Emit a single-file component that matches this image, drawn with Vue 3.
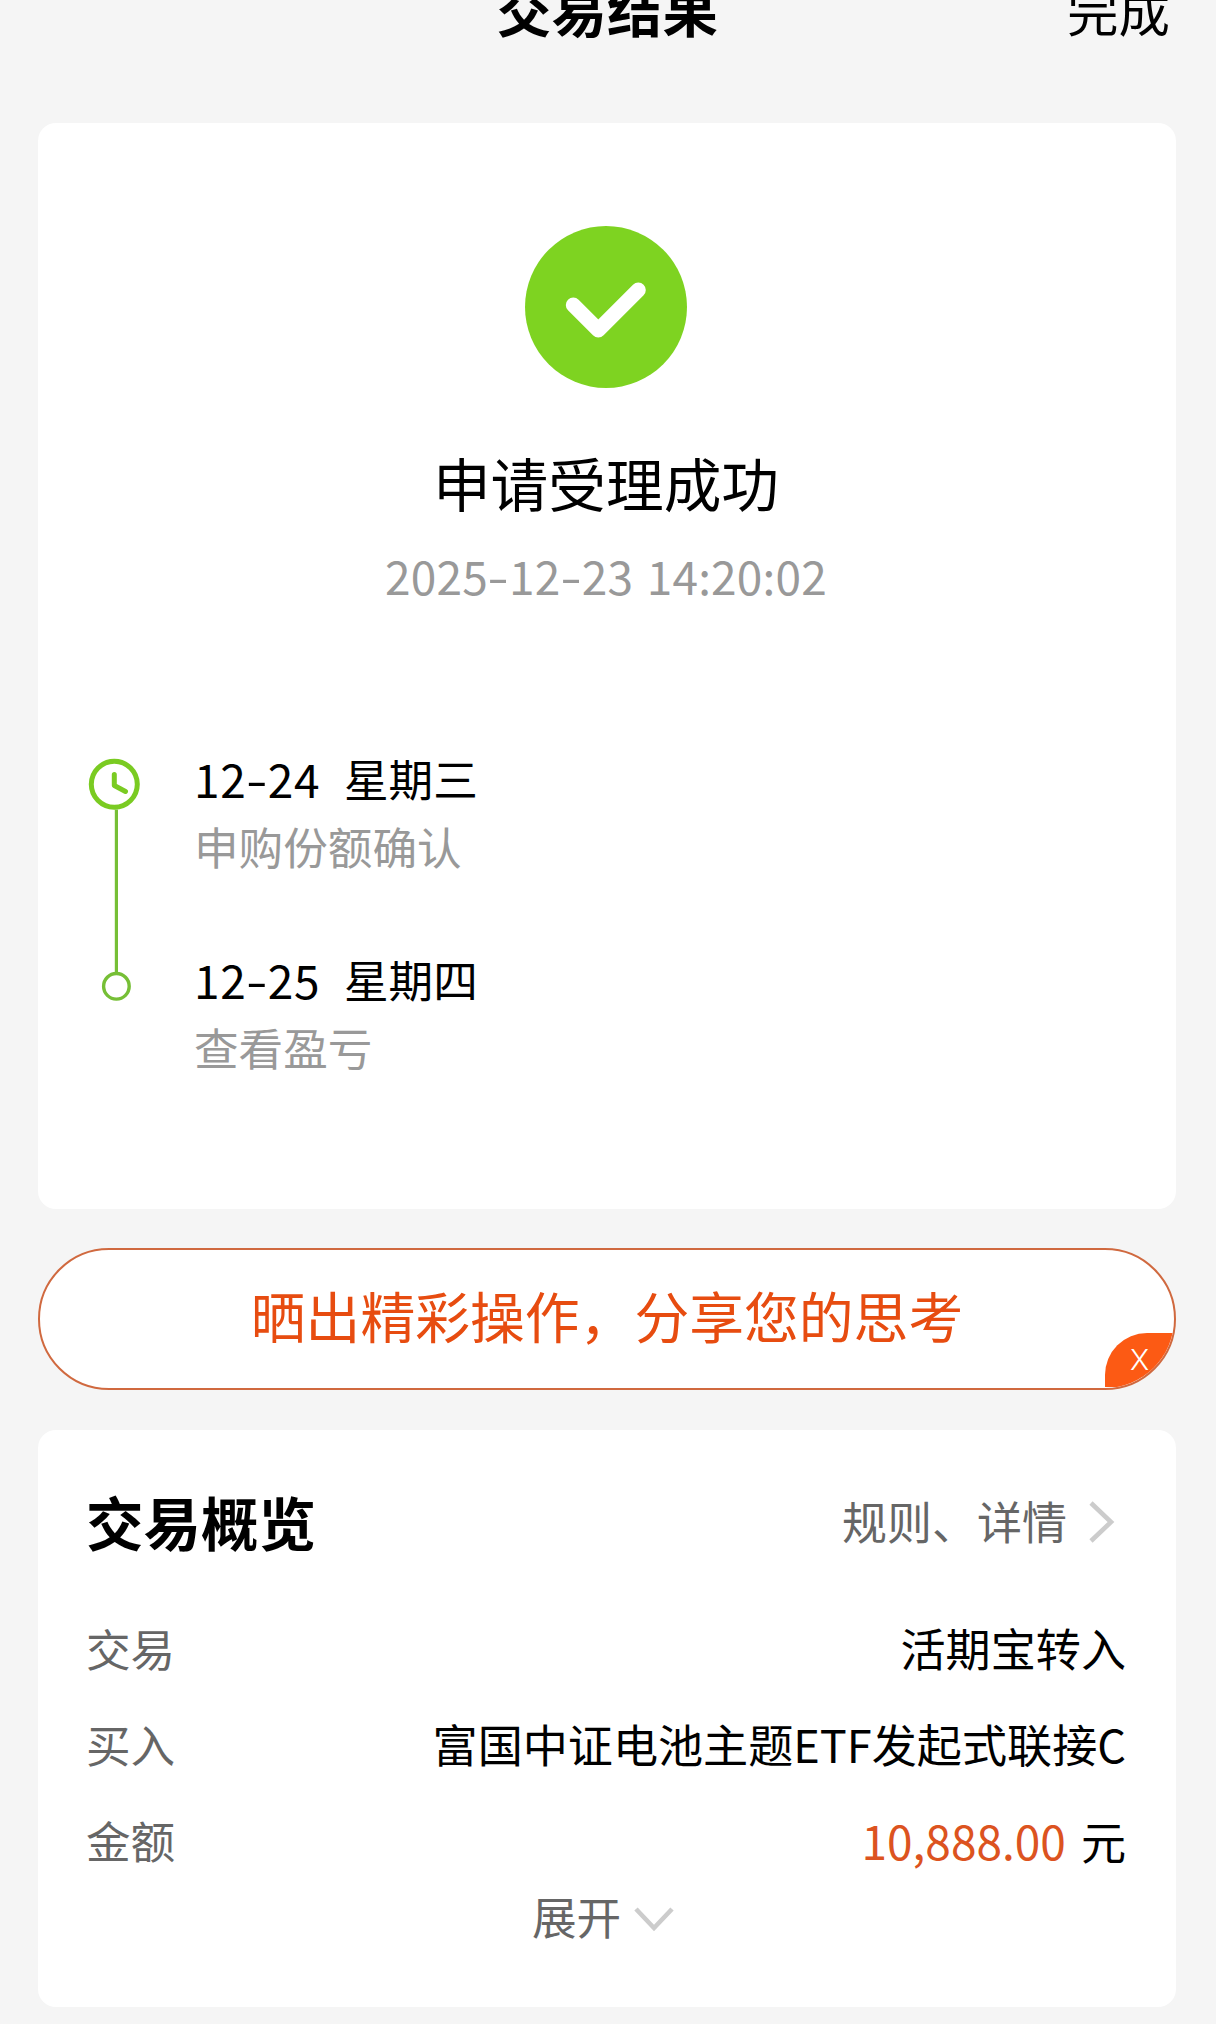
<template>
  <div class="page">
    <header class="top-bar">
      <h1 class="top-title">交易结果</h1>
      <span class="top-done">完成</span>
    </header>

    <section class="card result-card">
      <svg class="success-icon" viewBox="0 0 162 162" fill="none">
        <circle cx="81" cy="81" r="81" fill="#7ed321" />
        <path
          d="M48.3 79L73.3 104L113.3 64"
          stroke="#fff"
          stroke-width="15"
          stroke-linecap="round"
          stroke-linejoin="round"
        />
      </svg>
      <h2 class="result-title">申请受理成功</h2>
      <p class="result-time">2025<i>-</i>12<i>-</i>23 14:20:02</p>

      <div class="timeline">
        <svg class="timeline-rail" viewBox="0 0 60 270" fill="none">
          <circle cx="28.3" cy="40.3" r="23" stroke="#7acb22" stroke-width="5" />
          <path
            d="M28.3 30.5V41.5L39.5 47.5"
            stroke="#7acb22"
            stroke-width="5"
            stroke-linecap="round"
            stroke-linejoin="round"
          />
          <path d="M30.4 65.5V229" stroke="#76bf36" stroke-width="3.2" />
          <circle cx="30.4" cy="242.3" r="12.8" stroke="#76bf36" stroke-width="3.4" />
        </svg>
        <ul class="timeline-list">
          <li v-for="step in steps" :key="step.day" class="timeline-step">
            <div class="step-date">
              <span class="step-day">{{ step.month }}<i>-</i>{{ step.day }}</span>
              <span>{{ step.week }}</span>
            </div>
            <div class="step-desc">{{ step.desc }}</div>
          </li>
        </ul>
      </div>
    </section>

    <div class="share-bar">
      <span class="share-text">晒出精彩操作，分享您的思考</span>
      <button class="share-close">X</button>
    </div>

    <section class="card overview-card">
      <div class="overview-head">
        <h2 class="overview-title">交易概览</h2>
        <a class="overview-link">
          规则、详情
          <svg class="icon-right" viewBox="0 0 28 44" fill="none">
            <path d="M3 3L23 22L3 41" stroke="#ccc" stroke-width="4.6" />
          </svg>
        </a>
      </div>
      <div v-for="row in rows" :key="row.label" class="overview-row">
        <span class="row-label">{{ row.label }}</span>
        <span class="row-value">
          <span v-if="row.amount" class="row-amount">{{ row.amount }}</span>
          {{ row.value }}
        </span>
      </div>
      <div class="expand">
        展开
        <svg class="icon-down" viewBox="0 0 40 26" fill="none">
          <path d="M2 3L20 22L38 3" stroke="#ccc" stroke-width="4.6" />
        </svg>
      </div>
    </section>
  </div>
</template>

<script setup>
const steps = [
  { month: "12", day: "24", week: "星期三", desc: "申购份额确认" },
  { month: "12", day: "25", week: "星期四", desc: "查看盈亏" },
];

const rows = [
  { label: "交易", value: "活期宝转入" },
  { label: "买入", value: "富国中证电池主题ETF发起式联接C" },
  { label: "金额", amount: "10,888.00", value: "元" },
];
</script>

<style>
body {
  background: #f5f5f5;
}
</style>

<style scoped>
.page {
  box-sizing: border-box;
  width: 1216px;
  height: 2024px;
  padding: 0 40px 0 38px;
  overflow: hidden;
  background: #f5f5f5;
  color: #000;
  font-family: "Noto Sans CJK SC", sans-serif;
  font-size: 44.6px;
}
h1,
h2,
p,
ul {
  margin: 0;
  padding: 0;
  list-style: none;
}
i {
  display: inline-block;
  font-style: normal;
  transform: translateY(-1px) scaleX(1.35);
}
.top-bar {
  display: grid;
  grid-template-columns: 1fr auto 1fr;
  height: 123px;
  line-height: 17px;
  white-space: nowrap;
}
.top-title {
  grid-column: 2;
  font-size: 55.4px;
  font-weight: 700;
}
.top-done {
  justify-self: end;
  margin-right: 6px;
  font-size: 51.5px;
  line-height: 20px;
}
.card {
  box-sizing: border-box;
  background: #fff;
  border-radius: 18px;
}
.result-card {
  display: flex;
  flex-direction: column;
  align-items: center;
  height: 1086px;
  padding-top: 103px;
}
.success-icon {
  width: 162px;
  height: 162px;
  margin-right: 2px;
}
.result-title {
  margin: 54px 2px 0 0;
  font-size: 57.7px;
  font-weight: 400;
  line-height: 80px;
}
.result-time {
  margin: 23px 2px 0 0;
  font-size: 46px;
  line-height: 60px;
  letter-spacing: 0.2px;
  word-spacing: 3px;
  color: #999;
}
.result-time i,
.step-day i {
  margin: 0 2.5px;
}
.timeline {
  display: flex;
  align-self: stretch;
  margin-top: 139px;
  padding-left: 48px;
}
.timeline-rail {
  width: 60px;
  height: 270px;
  margin-right: 48px;
}
.timeline-step {
  margin-bottom: 65px;
  line-height: 68px;
}
.step-date {
  display: flex;
}
.step-day {
  width: 150px;
  font-size: 46px;
  letter-spacing: 0.6px;
}
.step-desc {
  color: #999;
}
.share-bar {
  position: relative;
  box-sizing: border-box;
  height: 142px;
  margin: 39px 0 40px;
  border: 2px solid #d0693f;
  border-radius: 71px;
  background: #fff;
  overflow: hidden;
  text-align: center;
}
.share-text {
  font-size: 54.8px;
  line-height: 128px;
  color: #e74c10;
}
.share-close {
  position: absolute;
  right: 0;
  bottom: 1px;
  width: 69px;
  height: 54px;
  padding: 0;
  border: 0;
  border-radius: 42px 0 0 0;
  background: #fc5a14;
  color: #fff;
  font-family: Inter, "Noto Sans CJK SC", sans-serif;
  font-size: 29px;
  font-weight: 300;
  line-height: 52px;
}
.overview-card {
  height: 577px;
  padding: 61px 50px 0 48px;
}
.overview-head {
  display: flex;
  justify-content: space-between;
  margin-bottom: 49px;
  line-height: 60px;
}
.overview-title {
  font-size: 57.5px;
  font-weight: 700;
}
.overview-link {
  display: flex;
  align-items: center;
  gap: 21px;
  margin-right: 10px;
  font-size: 45px;
  color: #666;
}
.icon-right {
  width: 28px;
  height: 44px;
  margin-top: 2px;
}
.overview-row {
  display: flex;
  justify-content: space-between;
  line-height: 96px;
}
.row-label {
  color: #666;
}
.row-value {
  font-size: 45.1px;
}
.row-amount {
  margin-right: 5px;
  font-size: 46px;
  color: #dc5320;
}
.expand {
  display: flex;
  justify-content: center;
  align-items: center;
  gap: 13px;
  padding-right: 6px;
  line-height: 54px;
  color: #666;
}
.icon-down {
  width: 40px;
  height: 26px;
  margin-top: 6px;
}
</style>
